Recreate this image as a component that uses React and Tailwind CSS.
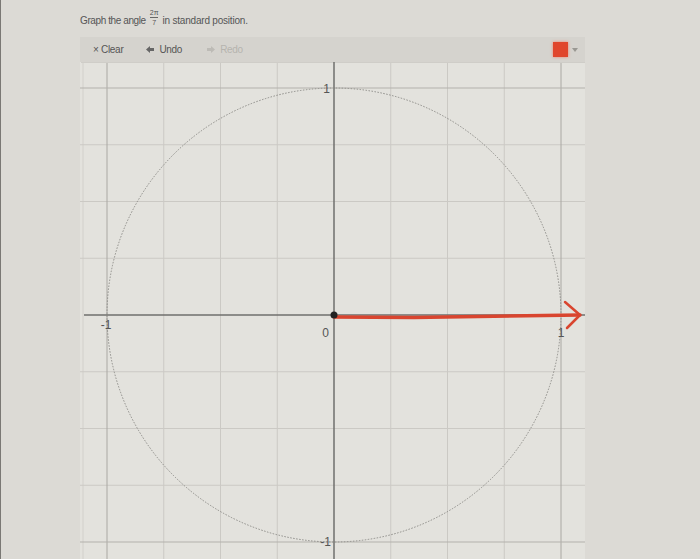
import React from 'react';

// unit circle graph: origin and scale measured off the reference
const OX = 254;
const OY = 253;
const STEP = 56.75;
const VX = [-3, -2, -1, 1, 2, 3, 5];
const HY = [-3, -2, -1, 1, 2, 3];

function Graph() {
  return (
    <svg width="505" height="497" viewBox="0 0 505 497" className="block">
      <rect x="0" y="0" width="505" height="497" fill="#e3e2dd" />
      <line x1="3" y1="0" x2="3" y2="497" stroke="#d2d0cb" strokeWidth="1" />
      {VX.map((k) => (
        <line key={'v' + k} x1={OX + k * STEP} y1="0" x2={OX + k * STEP} y2="497" stroke="#cbc9c4" strokeWidth="1" />
      ))}
      {HY.map((k) => (
        <line key={'h' + k} x1="0" y1={OY + k * STEP} x2="505" y2={OY + k * STEP} stroke="#cbc9c4" strokeWidth="1" />
      ))}
      {/* unit lines, a little darker */}
      {[-4, 4].map((k) => (
        <line key={'vu' + k} x1={OX + k * STEP} y1="0" x2={OX + k * STEP} y2="497" stroke="#aaa8a3" strokeWidth="1" />
      ))}
      {[-4, 4].map((k) => (
        <line key={'hu' + k} x1="0" y1={OY + k * STEP} x2="505" y2={OY + k * STEP} stroke="#b3b1ac" strokeWidth="1" />
      ))}
      <line x1="1" y1="0" x2="505" y2="0" stroke="#cfcdc8" strokeWidth="2" />
      {/* axes */}
      <line x1="4" y1={OY} x2="505" y2={OY} stroke="#6f6f6c" strokeWidth="1.5" />
      <line x1={OX} y1="0" x2={OX} y2="497" stroke="#6f6f6c" strokeWidth="1.5" />
      {/* unit circle */}
      <circle cx={OX} cy={OY} r="227" fill="none" stroke="#8e8d89" strokeWidth="1" strokeDasharray="1.5 1.5" />
      {/* labels */}
      <text x={OX - 4} y={OY - 227 + 5} textAnchor="end" fontSize="12" fill="#555" fontFamily="Liberation Sans, sans-serif">1</text>
      <text x={OX - 227 - 1} y={OY + 14} textAnchor="middle" fontSize="12" fill="#555" fontFamily="Liberation Sans, sans-serif">-1</text>
      <text x={OX - 5} y={OY + 22} textAnchor="end" fontSize="12" fill="#555" fontFamily="Liberation Sans, sans-serif">0</text>
      <text x={OX + 227} y={OY + 22} textAnchor="middle" fontSize="12" fill="#555" fontFamily="Liberation Sans, sans-serif">1</text>
      <text x={OX - 3} y={OY + 227 + 4} textAnchor="end" fontSize="12" fill="#555" fontFamily="Liberation Sans, sans-serif">-1</text>
      {/* drawn ray */}
      <path d={`M${OX} ${OY + 2} L${OX + 80} ${OY + 2.5} L${OX + 246} ${OY}`} fill="none" stroke="#d9452f" strokeWidth="3.5" strokeLinecap="round" />
      <path d={`M${OX + 231} ${OY - 13} L${OX + 246} ${OY} L${OX + 233} ${OY + 13}`} fill="none" stroke="#d9452f" strokeWidth="2.5" strokeLinecap="round" strokeLinejoin="round" />
      <circle cx={OX} cy={OY} r="3.5" fill="#222" />
    </svg>
  );
}

export default function App() {
  return (
    <div className="w-[700px] h-[559px] overflow-hidden bg-[#dcdad5] border-l border-[#7a7874] font-['Liberation_Sans',Arial,sans-serif]">
      <div className="pl-[79px] pt-[11px] h-[37px] flex items-start gap-1 text-[10px] tracking-[-0.4px] text-[#555]">
        <span className="mt-[2px]">Graph the angle</span>
        <span className="flex flex-col items-center text-[7px] leading-[7px] tracking-normal -mt-[2px]">
          <span>2π</span>
          <span className="w-[8px] h-0 border-t border-[#666] my-[1px]" />
          <span>7</span>
        </span>
        <span className="mt-[2px] tracking-[-0.2px]">in standard position.</span>
      </div>
      <div className="ml-[79px] w-[505px]">
        <div className="h-[25px] bg-[#d5d3ce] flex items-center text-[10px] tracking-[-0.3px] text-[#555]">
          <span className="ml-[13px]">× Clear</span>
          <span className="ml-[23px] flex items-center gap-[5px]">
            <svg width="8" height="7" viewBox="0 0 8 7"><path d="M0 3.5 L4 0 L4 2 L8 2 L8 5 L4 5 L4 7 Z" fill="#666" /></svg>
            Undo
          </span>
          <span className="ml-[25px] flex items-center gap-[5px] text-[#b5b3ae]">
            <svg width="8" height="7" viewBox="0 0 8 7"><path d="M8 3.5 L4 0 L4 2 L0 2 L0 5 L4 5 L4 7 Z" fill="#bdbbb6" /></svg>
            Redo
          </span>
          <span className="ml-auto w-[15px] h-[15px] bg-[#e0452c] shadow-[0_0_3px_#f08070]" />
          <svg className="ml-[4px] mr-[7px]" width="6" height="4" viewBox="0 0 6 4"><path d="M0 0 L6 0 L3 4 Z" fill="#9a9893" /></svg>
        </div>
        <Graph />
      </div>
    </div>
  );
}
